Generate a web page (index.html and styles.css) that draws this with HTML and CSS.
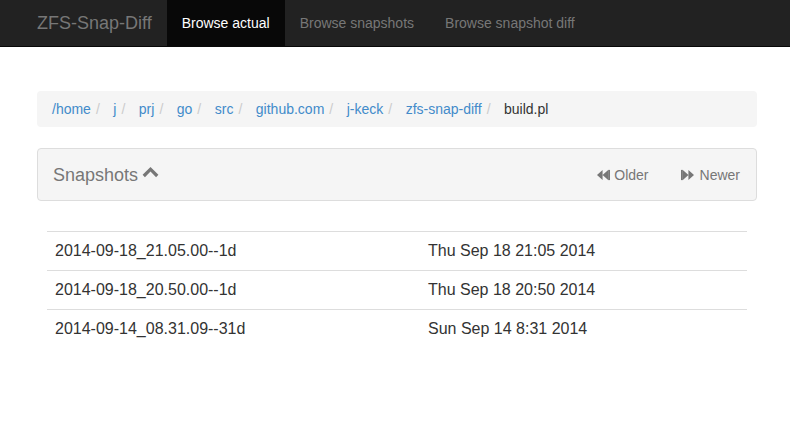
FILE: index.html
```html
<!DOCTYPE html>
<html>
<head>
<meta charset="utf-8">
<title>ZFS-Snap-Diff</title>
<link rel="stylesheet" href="styles.css">
</head>
<body>
<nav class="navbar">
  <a class="brand" href="#">ZFS-Snap-Diff</a>
  <ul class="nav">
    <li class="active"><a href="#">Browse actual</a></li>
    <li><a href="#">Browse snapshots</a></li>
    <li><a href="#">Browse snapshot diff</a></li>
  </ul>
</nav>
<main class="container">
  <ol class="breadcrumb">
    <li><a href="#">/home</a><span class="sep">/</span></li>
    <li><a href="#">j</a><span class="sep">/</span></li>
    <li><a href="#">prj</a><span class="sep">/</span></li>
    <li><a href="#">go</a><span class="sep">/</span></li>
    <li><a href="#">src</a><span class="sep">/</span></li>
    <li><a href="#">github.com</a><span class="sep">/</span></li>
    <li><a href="#">j-keck</a><span class="sep">/</span></li>
    <li><a href="#">zfs-snap-diff</a><span class="sep">/</span></li>
    <li class="current">build.pl</li>
  </ol>
  <div class="panel">
    <div class="panel-title">Snapshots
      <svg class="chev" width="17" height="13" viewBox="0 0 18 14"><path d="M9 1 L17.5 9.5 L15 12 L9 6 L3 12 L0.5 9.5 Z" fill="#777"/></svg>
    </div>
    <div class="panel-actions">
      <a class="btn" href="#"><svg width="13" height="12" viewBox="0 0 14 12"><path d="M0 6 L6 0.5 L6 11.5 Z M6 6 L12 0.5 L12 11.5 Z" fill="#777"/><rect x="12" y="0.5" width="2" height="11" fill="#777"/></svg>Older</a>
      <a class="btn newer" href="#"><svg width="13" height="12" viewBox="0 0 14 12"><rect x="0" y="0.5" width="2" height="11" fill="#777"/><path d="M2 0.5 L8 6 L2 11.5 Z M8 0.5 L14 6 L8 11.5 Z" fill="#777"/></svg>Newer</a>
    </div>
  </div>
  <table class="snaps">
    <tr><td class="name">2014-09-18_21.05.00--1d</td><td>Thu Sep 18 21:05 2014</td></tr>
    <tr><td class="name">2014-09-18_20.50.00--1d</td><td>Thu Sep 18 20:50 2014</td></tr>
    <tr><td class="name">2014-09-14_08.31.09--31d</td><td>Sun Sep 14 8:31 2014</td></tr>
  </table>
</main>
</body>
</html>
```
FILE: styles.css
```css
* { box-sizing: border-box; }
body {
  margin: 0;
  font-family: "Liberation Sans", Arial, sans-serif;
  font-size: 14px;
  line-height: 20px;
  color: #333;
  background: #fff;
}
a { text-decoration: none; }

.navbar {
  display: flex;
  align-items: stretch;
  height: 47px;
  background: #222;
  border-bottom: 1px solid #080808;
  padding-left: 22px;
}
.brand {
  padding: 0 15px;
  font-size: 18px;
  line-height: 46px;
  color: #777;
}
.nav {
  display: flex;
  list-style: none;
  margin: 0;
  padding: 0;
}
.nav a {
  display: block;
  padding: 0 15px;
  line-height: 46px;
  color: #777;
}
.nav li:last-child a { padding-left: 16px; }
.nav .active a {
  background: #080808;
  color: #fff;
}

.container {
  width: 720px;
  margin-left: 37px;
}

.breadcrumb {
  display: flex;
  list-style: none;
  margin: 44px 0 21px;
  padding: 8px 15px;
  background: #f5f5f5;
  border-radius: 4px;
  line-height: 20px;
}
.breadcrumb a { color: #428bca; }
.breadcrumb .sep {
  color: #ccc;
  padding-left: 5px;
  padding-right: 13.5px;
}
.breadcrumb .current { color: #333; }

.panel {
  display: flex;
  justify-content: space-between;
  align-items: center;
  height: 53px;
  padding: 0 16px 0 15px;
  background: #f5f5f5;
  border: 1px solid #ddd;
  border-radius: 4px;
  margin-bottom: 30px;
}
.panel-title {
  display: flex;
  align-items: center;
  font-size: 18px;
  color: #777;
}
.chev { margin-left: 4px; margin-top: -4px; }
.panel-actions {
  display: flex;
  gap: 32px;
}
.btn {
  display: flex;
  align-items: center;
  color: #777;
  font-size: 14px;
}
.btn svg { margin-right: 4px; }
.btn.newer svg { margin-right: 6px; }

.snaps {
  width: 700px;
  margin: 0 10px;
  border-collapse: collapse;
  font-size: 16px;
}
.snaps td {
  border-top: 1px solid #ddd;
  padding: 8px;
  line-height: 22px;
  color: #333;
}
.snaps td.name { width: 373px; }
```
